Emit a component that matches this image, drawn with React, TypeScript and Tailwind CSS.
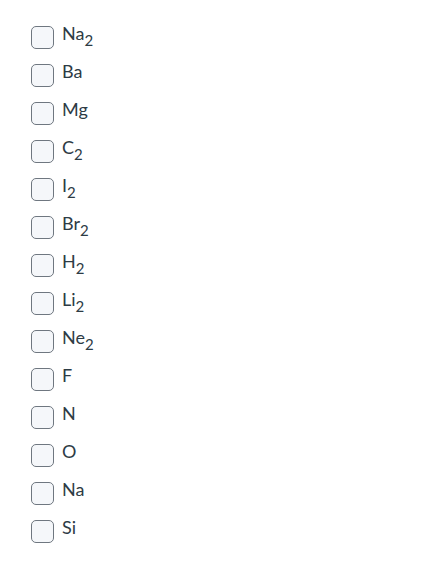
const options: { base: string; sub?: string }[] = [
  { base: "Na", sub: "2" },
  { base: "Ba" },
  { base: "Mg" },
  { base: "C", sub: "2" },
  { base: "I", sub: "2" },
  { base: "Br", sub: "2" },
  { base: "H", sub: "2" },
  { base: "Li", sub: "2" },
  { base: "Ne", sub: "2" },
  { base: "F" },
  { base: "N" },
  { base: "O" },
  { base: "Na" },
  { base: "Si" },
];

export default function App() {
  return (
    <div className="min-h-[563px] bg-white pt-[18px] pl-[31px] font-['Lato','Liberation_Sans',sans-serif] text-[#2d3b45]">
      {options.map((o, i) => (
        <label key={i} className="flex h-[38px] items-center gap-[8px] cursor-pointer">
          <span className="h-[23px] w-[23px] shrink-0 rounded-[5px] border border-[#6f7780] bg-[#f5f7fa]" />
          <span className="relative -top-[4px] text-[18px] leading-none">
            {o.base}
            {o.sub && <span className="relative top-[6px] text-[15px]">{o.sub}</span>}
          </span>
        </label>
      ))}
    </div>
  );
}
